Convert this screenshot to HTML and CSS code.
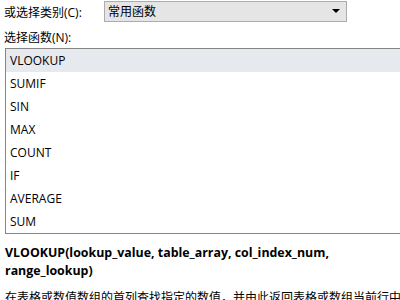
FILE: index.html
```html
<!DOCTYPE html>
<html lang="zh-CN">
<head>
    <meta charset="UTF-8">
    <title>插入函数</title>
    <link rel="stylesheet" href="styles.css">
</head>
<body>
    <div class="category-row">
        <label class="field-label" for="category">或选择类别(C):</label>
        <div class="combo" id="category">
            <span class="combo-text">常用函数</span>
            <span class="combo-arrow"></span>
        </div>
    </div>
    <div class="list-label">选择函数(N):</div>
    <ul class="func-list">
        <li class="selected">VLOOKUP</li>
        <li>SUMIF</li>
        <li>SIN</li>
        <li>MAX</li>
        <li>COUNT</li>
        <li>IF</li>
        <li>AVERAGE</li>
        <li>SUM</li>
    </ul>
    <div class="signature">VLOOKUP(lookup_value, table_array, col_index_num, range_lookup)</div>
    <div class="description">在表格或数值数组的首列查找指定的数值，并由此返回表格或数组当前行中指定列处的数值。</div>
</body>
</html>
```

FILE: styles.css
```css
body {
    margin: 0;
    background-color: #fff;
    color: #000;
    font-family: "Open Sans", "Noto Sans CJK SC", sans-serif;
    font-size: 12px;
    overflow: hidden;
}
.category-row {
    display: flex;
    align-items: center;
    height: 23px;
}
.field-label {
    width: 100px;
    padding-left: 4px;
}
.combo {
    display: flex;
    align-items: center;
    justify-content: space-between;
    width: 243px;
    height: 21px;
    margin-top: -1px;
    padding: 0 6px 0 3px;
    box-sizing: border-box;
    background-color: #e5e5e5;
    border: 1px solid #acacac;
}
.combo-arrow {
    width: 0;
    height: 0;
    border-left: 4px solid transparent;
    border-right: 4px solid transparent;
    border-top: 4px solid #000;
}
.list-label {
    padding-left: 4px;
    margin-top: 6px;
    line-height: 18px;
}
.func-list {
    list-style: none;
    margin: 1px 0 0 5px;
    padding: 0;
    width: 420px;
    border: 1px solid #858585;
}
.func-list li {
    height: 23px;
    line-height: 23px;
    padding-left: 4px;
}
.func-list li.selected {
    background-color: #e6e9ed; /* light selection */
}
.signature {
    margin: 10px 0 0 5px;
    width: 345px;
    font-weight: bold;
    font-size: 12.4px;
    line-height: 18px;
}
.description {
    margin: 9px 0 0 5px;
    width: 397px;
    line-height: 18px;
}
```
